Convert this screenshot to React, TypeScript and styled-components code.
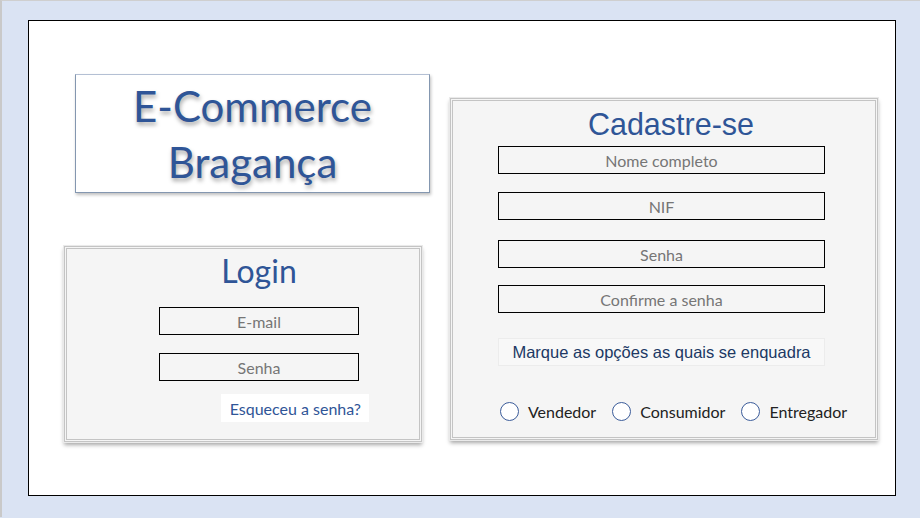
import React from 'react'
import styled, { createGlobalStyle } from 'styled-components'

const GlobalStyle = createGlobalStyle`
  html, body {
    margin: 0;
    padding: 0;
    background: #dae3f3;
  }
  body {
    border-left: 2px solid #c9c9c9;
    border-top: 1px solid #cfcfcf;
    height: 517px;
    box-sizing: border-box;
    font-family: Lato, "Open Sans", sans-serif;
  }
`

const App = () => {
  return (
    <>
      <GlobalStyle />
      <Slide>
        <LeftColumn>
          <TitleBox>
            <Title>E-Commerce</Title>
            <Title>Bragança</Title>
          </TitleBox>
          <LoginCard>
            <LoginHeading>Login</LoginHeading>
            <Field width={200} gap={18}>E-mail</Field>
            <Field width={200} gap={18}>Senha</Field>
            <Forgot>Esqueceu a senha?</Forgot>
          </LoginCard>
        </LeftColumn>
        <SignupCard>
          <SignupHeading>Cadastre-se</SignupHeading>
          <Field width={327} gap={18}>Nome completo</Field>
          <Field width={327} gap={20}>NIF</Field>
          <Field width={327} gap={17}>Senha</Field>
          <Field width={327} gap={0}>Confirme a senha</Field>
          <Hint>Marque as opções as quais se enquadra</Hint>
          <RadioRow>
            <RadioOption>
              <Circle />
              Vendedor
            </RadioOption>
            <RadioOption>
              <Circle />
              Consumidor
            </RadioOption>
            <RadioOption>
              <Circle />
              Entregador
            </RadioOption>
          </RadioRow>
        </SignupCard>
      </Slide>
    </>
  )
}

export default App

const Slide = styled.div`
  margin: 19px 0 0 26px;
  width: 868px;
  height: 476px;
  box-sizing: border-box;
  border: 1px solid #000;
  background: #fff;
  display: flex;
  align-items: flex-start;
  padding-left: 35px;
`
const LeftColumn = styled.div`
  display: flex;
  flex-direction: column;
  width: 366px;
  padding-top: 53px;
`
const TitleBox = styled.div`
  margin-left: 11px;
  width: 355px;
  height: 119px;
  box-sizing: border-box;
  border: 1px solid #8497b0;
  border-top-color: #b4c0d4;
  box-shadow: 1px 2px 3px rgba(0, 0, 0, 0.25);
  display: flex;
  flex-direction: column;
  align-items: center;
  justify-content: center;
`
const Title = styled.div`
  font-family: Lato, "Open Sans", sans-serif;
  font-size: 42px;
  line-height: 56px;
  color: #2f5597;
  text-shadow: 1px 3px 4px rgba(0, 0, 0, 0.35);
`
const Card = styled.div`
  box-sizing: border-box;
  background: #f5f5f5;
  border: 3px double #c4c4c4;
  outline: 1px solid #eaeaea;
  box-shadow: 0 3px 4px rgba(0, 0, 0, 0.35);
  display: flex;
  flex-direction: column;
  align-items: center;
`
const LoginCard = styled(Card)`
  margin-top: 53px;
  width: 358px;
  height: 196px;
  padding-top: 2px;
  padding-left: 32px;
`
const LoginHeading = styled.div`
  font-family: Lato, "Open Sans", sans-serif;
  font-size: 32px;
  line-height: 40px;
  color: #2f5597;
  margin-bottom: 16px;
`
const Field = styled.div<{ width: number; gap: number }>`
  width: ${p => p.width}px;
  height: 28px;
  box-sizing: border-box;
  border: 1px solid #000;
  margin-bottom: ${p => p.gap}px;
  font-family: Lato, "Open Sans", sans-serif;
  font-size: 16px;
  color: #767676;
  display: flex;
  align-items: center;
  justify-content: center;
`
const Forgot = styled.div`
  align-self: flex-end;
  margin-right: 50px;
  margin-top: -5px;
  background: #fff;
  padding: 0 8px 0 9px;
  height: 28px;
  display: flex;
  align-items: center;
  font-size: 16px;
  color: #2f5597;
`
const SignupCard = styled(Card)`
  margin-top: 77px;
  margin-left: 20px;
  width: 428px;
  height: 342px;
  padding-top: 6px;
  padding-right: 5px;
`
const SignupHeading = styled.div`
  font-family: "Liberation Sans", Arial, sans-serif;
  font-size: 30.5px;
  line-height: 34px;
  color: #2f5597;
  margin-bottom: 5px;
  margin-left: 19px;
`
const Hint = styled.div`
  margin-top: 25px;
  width: 327px;
  height: 28px;
  box-sizing: border-box;
  border: 1px solid #ececec;
  background: #f8f8f8;
  font-family: "Liberation Sans", Arial, sans-serif;
  font-size: 16.5px;
  color: #203864;
  display: flex;
  align-items: center;
  justify-content: center;
`
const RadioRow = styled.div`
  margin-top: 36px;
  display: flex;
  align-items: center;
  gap: 16px;
  margin-left: 24px;
`
const RadioOption = styled.label`
  display: flex;
  align-items: center;
  gap: 9px;
  font-family: Lato, "Open Sans", sans-serif;
  font-size: 16px;
  color: #222;
`
const Circle = styled.span`
  width: 19px;
  height: 19px;
  box-sizing: border-box;
  border: 1.5px solid #3b5c9a;
  border-radius: 50%;
  background: #fff;
`
